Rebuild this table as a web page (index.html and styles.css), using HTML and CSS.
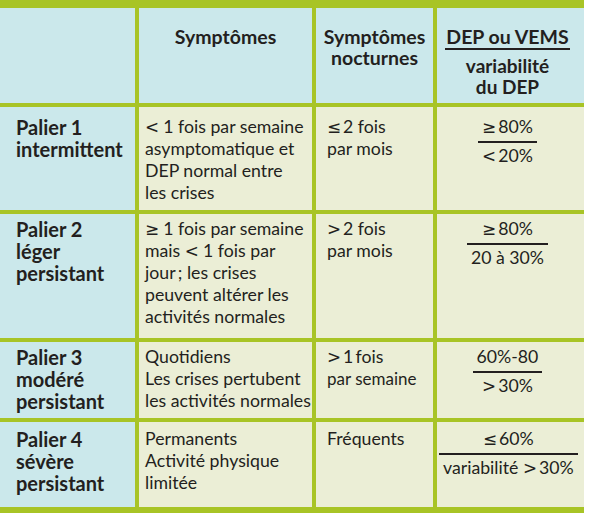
FILE: index.html
```html
<!DOCTYPE html>
<html lang="fr">
<head>
<meta charset="utf-8">
<title>Paliers de l'asthme</title>
<link rel="stylesheet" href="styles.css">
</head>
<body>
<div class="grid">
  <div class="cell head"></div>
  <div class="cell head center">Symptômes</div>
  <div class="cell head center">Symptômes<br>nocturnes</div>
  <div class="cell head center c4">
    <span class="frac"><span class="num">DEP ou VEMS</span><span class="den">variabilité<br>du DEP</span></span>
  </div>

  <div class="cell label r1">Palier 1<br>intermittent</div>
  <div class="cell body r1"><span class="sym">&lt;</span>&#8201;1 fois par semaine<br>asymptomatique et<br>DEP normal entre<br>les crises</div>
  <div class="cell body c3 r1"><span class="sym">&le;</span>2 fois<br>par mois</div>
  <div class="cell body center c4 r1"><span class="frac"><span class="num"><span class="sym">&ge;</span>80%</span><span class="den"><span class="sym">&lt;</span>20%</span></span></div>

  <div class="cell label r2">Palier 2<br>léger<br>persistant</div>
  <div class="cell body r2"><span class="sym">&ge;</span>&#8201;1 fois par semaine<br>mais <span class="sym">&lt;</span>&#8201;1 fois par<br>jour&#8201;; les crises<br>peuvent altérer les<br>activités normales</div>
  <div class="cell body c3 r2"><span class="sym">&gt;</span>2 fois<br>par mois</div>
  <div class="cell body center c4 r2"><span class="frac"><span class="num"><span class="sym">&ge;</span>80%</span><span class="den">20 à 30%</span></span></div>

  <div class="cell label r3">Palier 3<br>modéré<br>persistant</div>
  <div class="cell body r3">Quotidiens<br>Les crises pertubent<br>les activités normales</div>
  <div class="cell body c3 r3"><span class="sym">&gt;</span>1&#8201;fois<br><span class="small">par semaine</span></div>
  <div class="cell body center c4 r3"><span class="frac"><span class="num">60%-80</span><span class="den"><span class="sym">&gt;</span>30%</span></span></div>

  <div class="cell label r4">Palier 4<br>sévère<br>persistant</div>
  <div class="cell body r4">Permanents<br>Activité physique<br>limitée</div>
  <div class="cell body c3 r4">Fréquents</div>
  <div class="cell body center c4 r4"><span class="frac"><span class="num"><span class="sym">&le;</span>60%</span><span class="den">variabilité <span class="sym">&gt;</span>30%</span></span></div>
</div>
</body>
</html>
```

FILE: styles.css
```css
html, body {
  margin: 0;
  padding: 0;
  background: #ffffff;
}
body {
  font-family: Lato, "Open Sans", "DejaVu Sans", sans-serif;
  color: #231f20;
  font-size: 16px;
  line-height: 22px;
}
.grid {
  width: 584px;
  display: grid;
  grid-template-columns: 135px 173px 117px 147px;
  grid-template-rows: 95px 103px 124px 76px 85px;
  column-gap: 4px;
  row-gap: 4px;
  background: #a8c426;
  padding: 8px 0 6px 0;
}
.cell {
  background: #ebeed6;
  padding: 10px 6px 0 6px;
  white-space: nowrap;
}
.head {
  background: #cbe8eb;
  font-weight: 700;
  font-size: 19.5px;
  line-height: 21px;
  padding-top: 18px;
}
.label {
  background: #cbe8eb;
  font-weight: 700;
  font-size: 20px;
  padding-left: 16px;
}
.body {
  font-size: 17.7px;
}
.r1 { padding-top: 9px; }
.r2 { padding-top: 4px; }
.r3 { padding-top: 4px; }
.r4 { padding-top: 6px; }
.c3 {
  padding-left: 11px;
}
.c4 {
  padding-left: 2px;
  padding-right: 8px;
}
.small {
  font-size: 17px;
}
.center {
  text-align: center;
}
.sym {
  font-family: "DejaVu Sans", sans-serif;
  font-size: 0.95em;
  margin-right: 2px;
}
.frac {
  display: inline-flex;
  flex-direction: column;
  align-items: stretch;
  text-align: center;
}
.num {
  border-bottom: 2px solid #231f20;
  padding: 0 4px 3px 4px;
}
.den {
  padding: 2px 4px 0 4px;
}
.head .num {
  padding: 0 1px 1px 1px;
}
.head .den {
  padding-top: 5px;
  font-size: 19px;
  line-height: 21px;
}
```
